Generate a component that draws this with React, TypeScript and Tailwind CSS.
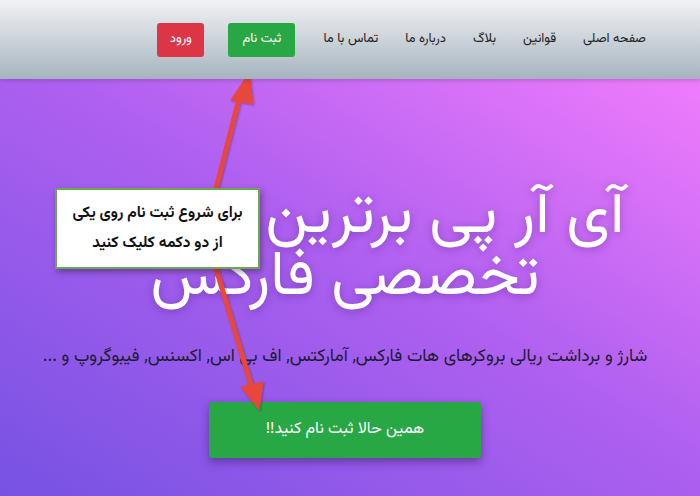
import React from "react";

const fa = { fontFamily: "Vazirmatn, 'Noto Sans Arabic', 'DejaVu Sans', sans-serif" };

export default function App() {
  return (
    <div dir="rtl" style={fa} className="relative w-[700px] h-[496px] overflow-hidden">
      <header className="h-[79px] flex items-center pr-[54px] bg-[linear-gradient(to_bottom,#f1f2f4,#a6b4bf)] shadow-[0_2px_4px_rgba(0,0,0,0.15)] relative z-10">
        <nav className="flex items-center gap-[27px] text-[13px] text-[#222]">
          <a>صفحه اصلی</a>
          <a>قوانین</a>
          <a>بلاگ</a>
          <a>درباره ما</a>
          <a>تماس با ما</a>
        </nav>
        <button className="mr-[28px] h-[34px] w-[67px] rounded-[3px] bg-[#28a745] text-white text-[13px]">ثبت نام</button>
        <button className="mr-[24px] h-[34px] w-[47px] rounded-[3px] bg-[#dc3545] text-white text-[13px]">ورود</button>
      </header>
      <main className="h-[417px] bg-[linear-gradient(to_top_right,#7652e3,#b060f0_55%,#f07cfc)] flex flex-col items-center pt-[107px] pr-[10px]">
        <h1 className="text-white text-[62px] leading-[62px] text-center [text-shadow:0_2px_8px_rgba(60,20,120,0.35)]">
          <div className="pl-[200px]">آی آر پی برترین</div>
          <div>تخصصی فارکس</div>
        </h1>
        <p className="mt-[34px] text-[17.5px] text-[#1d1b35]">شارژ و برداشت ریالی بروکرهای هات فارکس, آمارکتس, اف بی اس, اکسنس, فیبوگروپ و ...</p>
        <button className="mt-[32px] w-[272px] h-[56px] rounded-[3px] bg-[#28a745] text-white text-[16px] shadow-[0_4px_10px_rgba(40,20,80,0.45)]">همین حالا ثبت نام کنید!!</button>
      </main>
      <svg className="absolute inset-0 pointer-events-none" width="700" height="496" viewBox="0 0 700 496">
        <defs>
          <filter id="sh" x="-20%" y="-20%" width="140%" height="140%">
            <feDropShadow dx="1" dy="1" stdDeviation="1.2" floodColor="#000" floodOpacity="0.3" />
          </filter>
        </defs>
        <g filter="url(#sh)" fill="#e8463b" stroke="#e8463b">
          <line x1="205" y1="232" x2="240" y2="95" strokeWidth="5" strokeLinecap="round" />
          <polygon points="249,73 231,100 253,104" strokeWidth="1" />
          <line x1="205" y1="232" x2="252" y2="388" strokeWidth="5" strokeLinecap="round" />
          <polygon points="259,410 241,387 263,382" strokeWidth="1" />
        </g>
      </svg>
      <div className="absolute left-[55px] top-[188px] w-[205px] h-[81px] bg-white border-2 border-[#6aa84f] shadow-[2px_3px_6px_rgba(0,0,0,0.35)] flex flex-col items-center justify-center gap-[6px] text-[15.5px] font-bold text-[#111]">
        <div>برای شروع ثبت نام روی یکی</div>
        <div>از دو دکمه کلیک کنید</div>
      </div>
    </div>
  );
}
